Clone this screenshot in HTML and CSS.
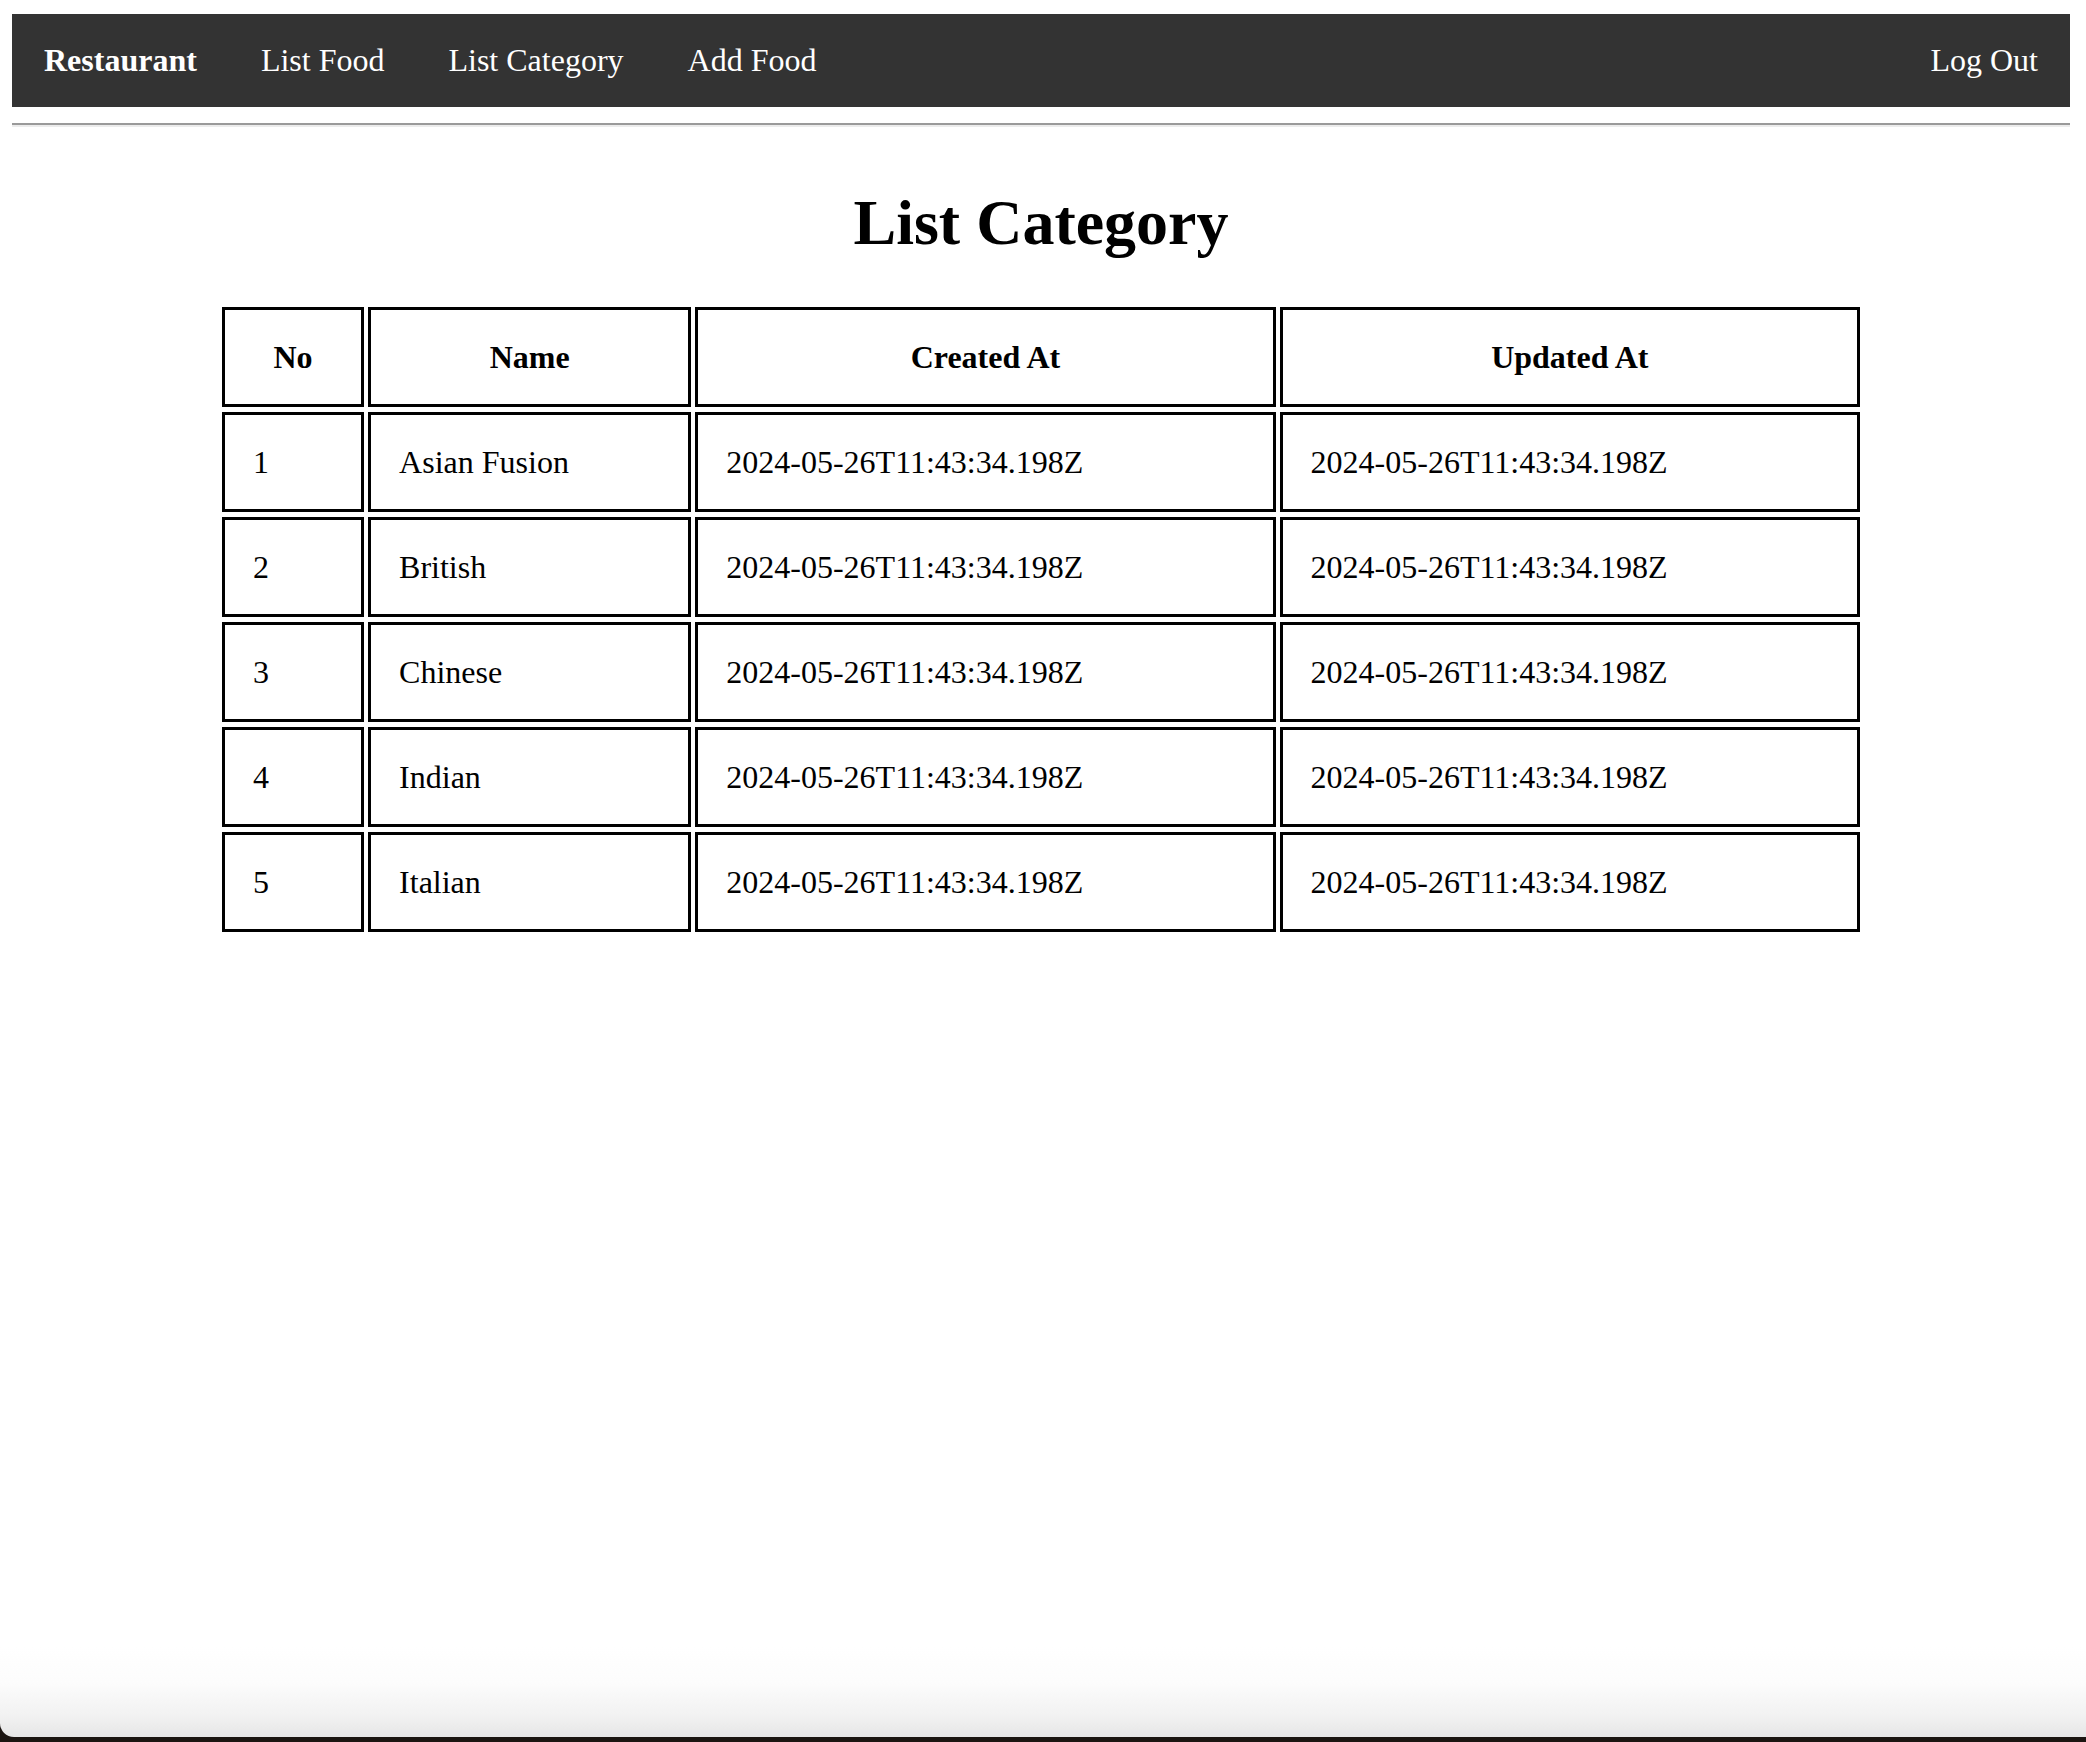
FILE: index.html
```html
<!DOCTYPE html>
<html lang="en">
<head>
<meta charset="utf-8">
<title>List Category</title>
<link rel="stylesheet" href="styles.css">
</head>
<body>
<nav class="navbar">
  <a class="nav-link brand" href="#">Restaurant</a>
  <a class="nav-link" href="#">List Food</a>
  <a class="nav-link" href="#">List Category</a>
  <a class="nav-link" href="#">Add Food</a>
  <a class="nav-link logout" href="#">Log Out</a>
</nav>
<hr class="divider">
<main class="content">
  <h1 class="title">List Category</h1>
  <table class="category-table">
    <colgroup>
      <col class="col-no">
      <col class="col-name">
      <col class="col-date">
      <col class="col-date">
    </colgroup>
    <thead>
      <tr><th>No</th><th>Name</th><th>Created At</th><th>Updated At</th></tr>
    </thead>
    <tbody>
      <tr><td>1</td><td>Asian Fusion</td><td>2024-05-26T11:43:34.198Z</td><td>2024-05-26T11:43:34.198Z</td></tr>
      <tr><td>2</td><td>British</td><td>2024-05-26T11:43:34.198Z</td><td>2024-05-26T11:43:34.198Z</td></tr>
      <tr><td>3</td><td>Chinese</td><td>2024-05-26T11:43:34.198Z</td><td>2024-05-26T11:43:34.198Z</td></tr>
      <tr><td>4</td><td>Indian</td><td>2024-05-26T11:43:34.198Z</td><td>2024-05-26T11:43:34.198Z</td></tr>
      <tr><td>5</td><td>Italian</td><td>2024-05-26T11:43:34.198Z</td><td>2024-05-26T11:43:34.198Z</td></tr>
    </tbody>
  </table>
</main>
<div class="window-edge"><div class="window-shade"></div></div>
</body>
</html>
```
FILE: styles.css
```css
html, body {
  background: #ffffff;
}
body {
  margin: 14px 16px 0 12px;
  font-family: "Liberation Serif", "Times New Roman", serif;
  font-size: 32px;
  color: #000;
}
.navbar {
  display: flex;
  background: #333333;
}
.nav-link {
  display: block;
  padding: 28px 32px;
  color: #ffffff;
  text-decoration: none;
  line-height: normal;
}
.brand {
  font-weight: bold;
}
.logout {
  margin-left: auto;
}
.divider {
  margin: 16px 0 0;
  height: 0;
  border: none;
  border-top: 2px solid #9a9a9a;
  border-bottom: 2px solid #ececec;
}
.title {
  margin: 59px 0 42px;
  font-size: 64px;
  font-weight: bold;
  text-align: center;
  line-height: normal;
}
.category-table {
  width: 1646px;
  margin: 0 auto;
  border-spacing: 4px 5px;
  table-layout: fixed;
}
.col-no { width: 142px; }
.col-name { width: 323px; }
.col-date { width: 580px; }
.category-table th,
.category-table td {
  border: 3px solid #000;
  height: 94px;
  padding: 0 28px;
  vertical-align: middle;
  line-height: normal;
}
.category-table th {
  text-align: center;
  font-weight: bold;
}
.category-table td {
  text-align: left;
}
.window-edge {
  position: fixed;
  left: 0;
  right: 0;
  bottom: 0;
  height: 95px;
  background: #1b1511;
  pointer-events: none;
}
.window-shade {
  height: 90px;
  border-bottom-left-radius: 14px;
  background: linear-gradient(to bottom, #ffffff 0%, #fcfcfc 40%, #f2f2f2 75%, #e6e6e6 100%);
}
```
